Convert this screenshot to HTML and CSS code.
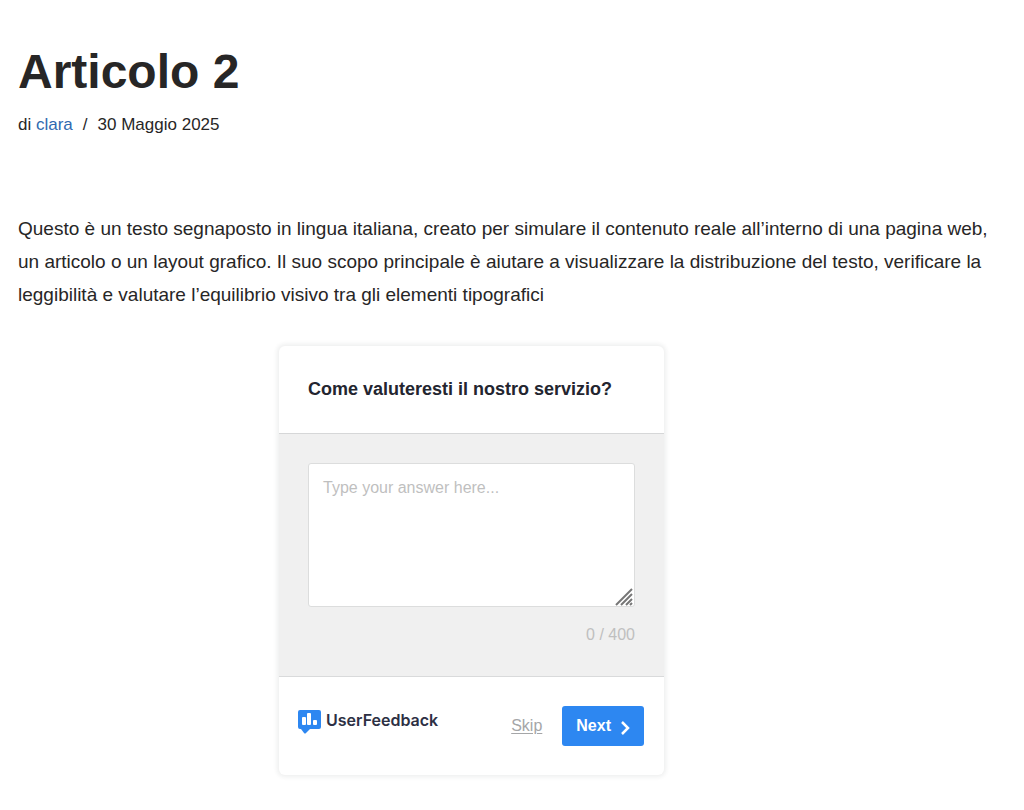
FILE: index.html
```html
<!DOCTYPE html>
<html lang="it">
<head>
	<meta charset="utf-8">
	<meta name="viewport" content="width=device-width, initial-scale=1">
	<title>Articolo 2</title>
	<link rel="stylesheet" href="styles.css">
</head>
<body>
	<article>
		<h1>Articolo 2</h1>
		<p class="meta">di <a href="#">clara</a><span class="separator">/</span>30 Maggio 2025</p>
		<p class="content">Questo è un testo segnaposto in lingua italiana, creato per simulare il contenuto reale all’interno di una pagina web, un articolo o un layout grafico. Il suo scopo principale è aiutare a visualizzare la distribuzione del testo, verificare la leggibilità e valutare l’equilibrio visivo tra gli elementi tipografici</p>
	</article>

	<div class="survey-wrap">
		<form class="survey">
			<div class="survey-header">
				<label for="answer">Come valuteresti il nostro servizio?</label>
			</div>
			<div class="survey-body">
				<div class="answer-box">
					<textarea id="answer" maxlength="400" placeholder="Type your answer here..."></textarea>
					<svg class="grip" width="18" height="18" viewBox="0 0 18 18" aria-hidden="true">
						<path d="M1 17L17 1M6 17L17 6M11 17L17 11M15 17L17 15"/>
					</svg>
				</div>
				<div class="counter"><span id="count">0</span> / 400</div>
			</div>
			<div class="survey-footer">
				<a class="logo" href="#">
					<svg width="24" height="24" viewBox="0 0 24 24" aria-hidden="true">
						<path fill="#2d87f1" d="M2 0H21Q23 0 23 2V17Q23 19 21 19H12L8 23Q7 24 6 23L3 19H2Q0 19 0 17V2Q0 0 2 0Z"/>
						<g fill="#fff">
							<rect x="4" y="7" width="4" height="8" rx="1"/>
							<rect x="9" y="3" width="4" height="12" rx="1"/>
							<rect x="15" y="10" width="4" height="5" rx="1"/>
						</g>
					</svg>
					UserFeedback
				</a>
				<div class="actions">
					<button type="button" class="skip">Skip</button>
					<button type="button" class="next">Next
						<svg width="10" height="14" viewBox="0 0 10 14" aria-hidden="true">
							<path fill="none" stroke="#fff" stroke-width="2.500" d="M2 1L8 7L2 13"/>
						</svg>
					</button>
				</div>
			</div>
		</form>
	</div>

	<script>
		const answer = document.getElementById('answer');
		answer.addEventListener('input', function () {
			document.getElementById('count').textContent = answer.value.length;
		});
	</script>
</body>
</html>
```
FILE: styles.css
```css
* {
    box-sizing: border-box;
}
body {
    margin: 0;
    padding: 43px 18px 32px;
    background-color: #fff;
    color: #272626;
    font-family: "Liberation Sans", Arial, sans-serif;
}
h1 {
    margin: 0;
    font-size: 48px;
    line-height: 58px;
}
.meta {
    margin: 12px 0 0;
    font-size: 17px;
    line-height: 24px;
}
.meta a {
    color: #2f69b0;
    text-decoration: none;
}
.separator {
    margin: 0 10px;
}
.content {
    margin: 75px 0 0;
    font-size: 19px;
    line-height: 33px;
}
.survey-wrap {
    display: flex;
    justify-content: center;
    margin-top: 35px;
    padding-right: 81px;
}
.survey {
    width: 100%;
    max-width: 385px;
    border-radius: 6px;
    background-color: #fff;
    box-shadow: 0 0 4px 2px rgba(35, 55, 55, 0.08);
}
.survey-header {
    padding: 31px 29px;
    border-bottom: 1px solid #d6d7d8;
    color: #23252f;
    font-size: 18px;
    font-weight: bold;
    line-height: 25px;
}
.survey-body {
    padding: 29px;
    border-bottom: 1px solid #d9dadb;
    background-color: #f0f0f0;
}
.answer-box {
    position: relative;
}
textarea {
    display: block;
    width: 100%;
    height: 144px;
    padding: 14px;
    border: 1px solid #dcdddd;
    border-radius: 3px;
    background-color: #fff;
    color: #23252f;
    font-family: inherit;
    font-size: 16px;
    line-height: 19px;
    resize: none;
}
textarea::placeholder {
    color: #bfbfbf;
}
.grip {
    position: absolute;
    right: 2px;
    bottom: 1px;
    fill: none;
    stroke: #777;
    stroke-width: 2;
    pointer-events: none;
}
.counter {
    margin-top: 16px;
    color: #bfbfbf;
    font-size: 16px;
    line-height: 24px;
    text-align: right;
}
.survey-footer {
    display: flex;
    justify-content: space-between;
    padding: 29px 20px 29px 19px;
}
.logo {
    display: flex;
    gap: 4px;
    height: 28px;
    padding-top: 4px;
    color: #2d3044;
    font-family: Inter, sans-serif;
    font-size: 16px;
    font-weight: 600;
    line-height: 20px;
    text-decoration: none;
}
.actions {
    display: flex;
    align-items: center;
    gap: 20px;
}
button {
    border: 0;
    font-family: inherit;
    font-size: 16px;
    cursor: pointer;
}
.skip {
    padding: 0;
    background: none;
    color: #a5a6a8;
    text-decoration: underline;
    text-underline-offset: 2px;
}
.next {
    display: flex;
    align-items: center;
    gap: 9px;
    height: 40px;
    padding: 0 14px;
    border-radius: 3px;
    background-color: #2d87f1;
    color: #fff;
    font-weight: bold;
}
.next svg {
    margin-top: 3px;
}
```
